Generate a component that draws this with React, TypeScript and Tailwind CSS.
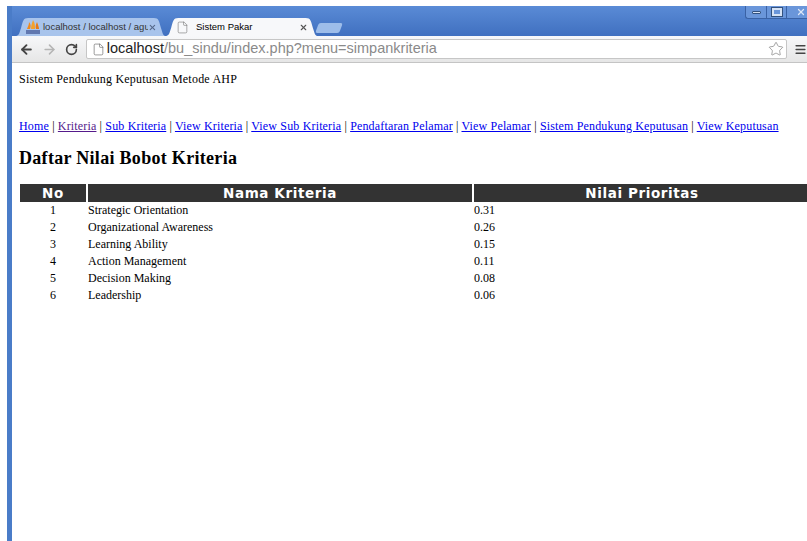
import { ArrowLeft, ArrowRight, File, Menu, RotateCw, Star, X } from "lucide-react";

const links = [
  "Home",
  "Kriteria",
  "Sub Kriteria",
  "View Kriteria",
  "View Sub Kriteria",
  "Pendaftaran Pelamar",
  "View Pelamar",
  "Sistem Pendukung Keputusan",
  "View Keputusan",
];

const rows = [
  ["1", "Strategic Orientation", "0.31"],
  ["2", "Organizational Awareness", "0.26"],
  ["3", "Learning Ability", "0.15"],
  ["4", "Action Management", "0.11"],
  ["5", "Decision Making", "0.08"],
  ["6", "Leadership", "0.06"],
];

// Slanted browser tab outline, stretched to the tab's box
const TabShape = ({ fill }: { fill: string }) => (
  <svg className="absolute inset-0 h-full w-full" viewBox="0 0 150 18" preserveAspectRatio="none">
    <path d="M0 18 C4 18 4 16 6 10 C8 3 8 0 13 0 L138 0 C143 0 143 3 145 10 C147 16 147 18 150 18 Z" fill={fill} />
  </svg>
);

const PmaIcon = () => (
  <svg width="16" height="15" viewBox="0 0 16 15" className="shrink-0">
    <path d="M2 9 C3 6 4 5 4 2 C6 4 6 7 5 9 Z" fill="#f08a1d" />
    <path d="M6 9 C6 6 7 3 8 0 C10 3 10 6 10 9 Z" fill="#f4a12c" />
    <path d="M11 9 C10 7 11 4 12 2 C13 5 14 7 14 9 Z" fill="#e87a16" />
    <rect x="1" y="10" width="14" height="4" fill="#4a5f9c" opacity="0.75" />
  </svg>
);

const App = () => {
  return (
    <div className="h-[541px] w-[807px] overflow-hidden bg-white pl-[7px] pt-[6px]">
      <div className="flex h-full flex-col bg-[#4a7cc8] pl-[5px]">
        {/* Title bar with window controls */}
        <div className="flex h-[30px] shrink-0 flex-col bg-gradient-to-b from-[#5a8bd6] to-[#4070c0]">
          <div className="flex h-[12px] justify-end pr-0">
            <div className="mr-[0px] flex h-[13px] w-[62px] items-center rounded-bl-[3px] border-b border-l border-[#3a62a5] bg-[#6a96da]">
              <div className="flex h-full w-[21px] items-center justify-center border-r border-[#3a62a5]">
                <div className="h-[3px] w-[9px] rounded-[1px] border border-[#33527f] bg-[#d5e2f5]" />
              </div>
              <div className="flex h-full w-[20px] items-center justify-center border-r border-[#3a62a5]">
                <div className="h-[8px] w-[10px] border-2 border-[#d5e2f5] outline outline-[#33527f]" />
              </div>
              <div className="flex flex-1 items-center justify-center pl-[8px]">
                <X size={10} strokeWidth={3} className="text-[#dbe6f6]" />
              </div>
            </div>
          </div>

          {/* Tab strip */}
          <div className="flex h-[18px] items-end pl-[3px]">
            <div className="relative flex h-[18px] w-[151px] items-center pl-[10px] pr-[9px] text-[9.5px] text-[#333] [font-family:'Liberation_Sans',sans-serif]">
              <TabShape fill="#a8c4ec" />
              <div className="relative flex w-full items-center">
                <PmaIcon />
                <span className="ml-[2px] w-[107px] overflow-hidden whitespace-nowrap">localhost / localhost / agustin</span>
                <X size={9} strokeWidth={3} className="ml-auto text-[#56698a]" />
              </div>
            </div>
            <div className="relative z-10 -ml-[1px] flex h-[18px] w-[153px] items-center pl-[11px] pr-[10px] text-[9.5px] text-black [font-family:'Liberation_Sans',sans-serif]">
              <TabShape fill="#f7f8fa" />
              <div className="relative flex w-full items-center">
                <File size={13} strokeWidth={1} className="shrink-0 text-[#666]" />
                <span className="ml-[7px]">Sistem Pakar</span>
                <X size={9} strokeWidth={3} className="ml-auto text-[#555]" />
              </div>
            </div>
            <div className="-ml-[1px] mb-[3px] h-[10px] w-[24px] -skew-x-[20deg] rounded-[2px] bg-[#9dbdea]" />
          </div>
        </div>

        {/* Toolbar */}
        <div className="flex h-[27px] shrink-0 items-center border-b border-[#c4c4c4] bg-gradient-to-b from-[#f7f8fa] to-[#e6e6e6] [font-family:'Liberation_Sans',sans-serif]">
          <div className="flex w-[74px] items-center pl-[7px]">
            <ArrowLeft size={15} strokeWidth={3} className="text-[#444]" />
            <ArrowRight size={15} strokeWidth={2.5} className="ml-[8px] text-[#b5b5b5]" />
            <RotateCw size={13} strokeWidth={3} className="ml-[8px] text-[#444]" />
          </div>
          <div className="flex h-[20px] w-[704px] items-center rounded-[2px] border border-[#c6c6c6] bg-white pl-[5px] pr-[2px] text-[14.5px]">
            <File size={13} strokeWidth={1.2} className="shrink-0 text-[#666]" />
            <span className="ml-[2px] text-[#222]">localhost</span>
            <span className="text-[#8a8a8a]">/bu_sindu/index.php?menu=simpankriteria</span>
            <Star size={16} strokeWidth={1} className="ml-auto text-[#777]" />
          </div>
          <Menu size={13} strokeWidth={3} className="ml-[7px] shrink-0 text-[#444]" />
        </div>

        {/* Page content */}
        <div className="min-h-0 flex-1 overflow-hidden bg-white pl-[7px] pt-[9px] text-[12px] text-black [font-family:'Liberation_Serif',serif]">
          <p className="h-[14px] leading-[14px] tracking-[0.22px]">Sistem Pendukung Keputusan Metode AHP</p>
          <p className="mt-[33px] whitespace-nowrap leading-[14px] tracking-[0.16px]">
            {links.map((label, index) => (
              <span key={label}>
                {index > 0 && " | "}
                <a href="#" className={index === 1 ? "text-[#551a8b] underline" : "text-[#0000ee] underline"}>
                  {label}
                </a>
              </span>
            ))}
          </p>
          <h2 className="mt-[15px] text-[18px] font-bold leading-[21px] tracking-[0.3px]">Daftar Nilai Bobot Kriteria</h2>
          <table className="ml-[1px] mt-[15px] w-[790px] table-fixed border-separate border-spacing-0">
            <thead>
              <tr className="h-[18px] text-[13.5px] font-bold text-white [font-family:'DejaVu_Sans',sans-serif]">
                <th className="w-[66px] bg-[#333333] p-0 leading-[18px] tracking-[0.6px]">No</th>
                <th className="w-[386px] border-l-2 border-white bg-[#333333] p-0 leading-[18px] tracking-[0.6px]">Nama Kriteria</th>
                <th className="border-l-2 border-white bg-[#333333] p-0 leading-[18px] tracking-[0.6px]">Nilai Prioritas</th>
              </tr>
            </thead>
            <tbody>
              {rows.map(([no, name, value]) => (
                <tr key={no} className="h-[17px] leading-[17px]">
                  <td className="p-0 text-center">{no}</td>
                  <td className="p-0 pl-[2px]">{name}</td>
                  <td className="p-0 pl-[2px]">{value}</td>
                </tr>
              ))}
            </tbody>
          </table>
        </div>
      </div>
    </div>
  );
};

export default App;
